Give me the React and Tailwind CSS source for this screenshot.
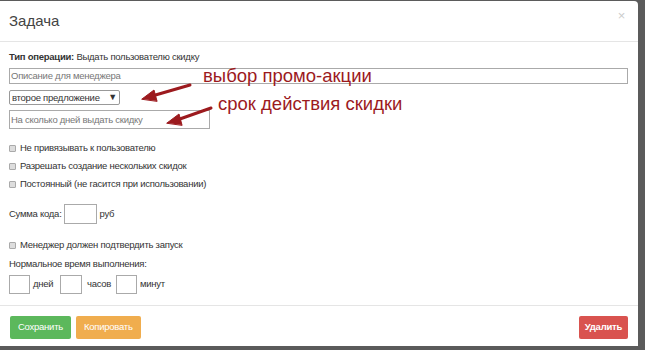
export default function App() {
  const font = { fontFamily: '"Liberation Sans", Arial, sans-serif' };
  return (
    <div className="w-[645px] h-[350px] bg-[#5b5b5b] overflow-hidden" style={font}>
      <div className="relative w-[638px] h-[345px] mt-[1px] bg-white rounded-tr-[4px] flex flex-col text-[9.5px] tracking-[-0.25px] text-[#333]">
        <div className="h-[41px] border-b border-[#e5e5e5] flex items-center justify-between pl-[9px] pr-[13px]">
          <span className="text-[15px] font-light tracking-normal text-[#444]">Задача</span>
          <span className="text-[13px] text-[#ccc] -mt-[10px]">×</span>
        </div>

        <div className="flex-1 pl-[9px] pr-[10px] pt-[9px]">
          <div className="h-[12px] leading-[12px]">
            <b>Тип операции:</b> Выдать пользователю скидку
          </div>
          <div className="mt-[5px] h-[16px] border border-[#aaa] px-[1px] leading-[14px] text-[#777]">
            Описание для менеджера
          </div>
          <div className="mt-[6px] w-[111px] h-[15px] border border-[#999] rounded-[2px] px-[2px] leading-[13px] flex justify-between whitespace-nowrap">
            <span>второе предложение</span>
            <span className="text-[9px]">▼</span>
          </div>
          <div className="mt-[5px] w-[201px] h-[19px] border border-[#aaa] px-[1px] leading-[17px] text-[#777]">
            На сколько дней выдать скидку
          </div>

          <div className="mt-[13px] flex flex-col gap-[6px]">
            {['Не привязывать к пользователю', 'Разрешать создание нескольких скидок', 'Постоянный (не гасится при использовании)'].map((t) => (
              <div key={t} className="flex items-center h-[12px]">
                <span className="w-[7px] h-[7px] border border-[#aaa] bg-[#ddd] rounded-[1px] mr-[4px]" />
                {t}
              </div>
            ))}
          </div>

          <div className="mt-[14px] flex items-center">
            <span>Сумма кода:</span>
            <span className="ml-[2px] w-[33px] h-[20px] border border-[#aaa]" />
            <span className="ml-[3px]">руб</span>
          </div>

          <div className="mt-[15px] flex items-center h-[12px]">
            <span className="w-[7px] h-[7px] border border-[#aaa] bg-[#ddd] rounded-[1px] mr-[4px]" />
            Менеджер должен подтвердить запуск
          </div>
          <div className="mt-[6px] h-[12px]">Нормальное время выполнения:</div>
          <div className="mt-[6px] flex items-center">
            <span className="w-[21px] h-[19px] border border-[#aaa]" />
            <span className="ml-[3px] w-[27px]">дней</span>
            <span className="w-[22px] h-[19px] border border-[#aaa]" />
            <span className="ml-[5px] w-[29px]">часов</span>
            <span className="w-[21px] h-[19px] border border-[#aaa]" />
            <span className="ml-[3px]">минут</span>
          </div>
        </div>

        <div className="h-[41px] border-t border-[#e5e5e5] flex items-start pt-[10px] pl-[10px] pr-[10px] text-white text-[9.5px]">
          <div className="h-[23px] px-[8px] bg-[#5cb85c] rounded-[2px] flex items-center">Сохранить</div>
          <div className="ml-[5px] h-[23px] px-[8px] bg-[#f0ad4e] rounded-[2px] flex items-center">Копировать</div>
          <div className="ml-auto h-[23px] px-[6px] bg-[#d9534f] rounded-[2px] flex items-center font-bold">Удалить</div>
        </div>

        <div className="absolute left-[203px] top-[64px] text-[18.5px] tracking-normal text-[#9c1a1e] leading-[22px]">выбор промо-акции</div>
        <div className="absolute left-[218px] top-[92px] text-[18.5px] tracking-normal text-[#9c1a1e] leading-[22px]">срок действия скидки</div>
        <svg className="absolute left-0 top-0" width="638" height="345">
          <g fill="#9c1a1e" stroke="#9c1a1e" strokeLinecap="round">
            <line x1="190" y1="84" x2="152" y2="95" strokeWidth="3" />
            <polygon points="142,98 154,89 157,100" strokeWidth="1" />
            <line x1="211" y1="107" x2="177" y2="119" strokeWidth="3" />
            <polygon points="167,122 179,113 182,124" strokeWidth="1" />
          </g>
        </svg>
      </div>
    </div>
  );
}
